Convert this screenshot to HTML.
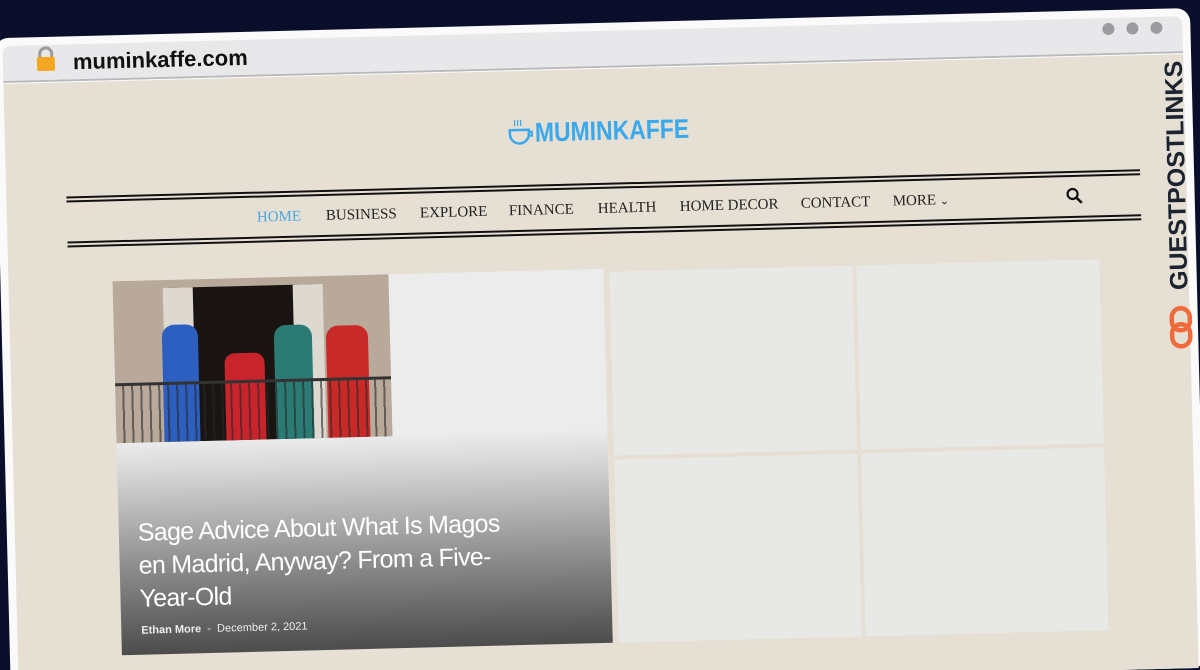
<!DOCTYPE html>
<html><head><meta charset="utf-8"><style>
*{margin:0;padding:0;box-sizing:border-box}
html,body{width:1200px;height:670px;overflow:hidden;background:#0a0e2a}
.clip{position:absolute;left:0;top:0;width:1200px;height:670px;overflow:hidden}
.stage{position:absolute;left:0;top:0;width:1200px;height:670px;transform:rotate(-1.45deg);transform-origin:600px 335px}
.frame{position:absolute;left:2px;top:23px;width:1196px;height:660px;background:#fafafa;border-radius:14px}
.bar{position:absolute;left:10px;top:31px;width:1180px;height:37px;background:#e8e8ea;border-bottom:2px solid #b9b9bb;border-radius:8px 8px 0 0}
.content{position:absolute;left:10px;top:69px;width:1180px;height:614px;background:#e6dfd4}
.url{position:absolute;left:80px;top:36px;font:600 22px "Liberation Sans",sans-serif;color:#111}
.dot{position:absolute;top:36px;width:12px;height:12px;border-radius:50%;background:#9c9c9e}
.logo{position:absolute;left:540px;top:116px;font:bold 27px "Liberation Sans",sans-serif;color:#3aa9ec;transform:scaleX(.85);transform-origin:left}
.line{position:absolute;left:70px;width:1074px;height:6px;border-top:2px solid #111;border-bottom:2px solid #111}
.nav{position:absolute;top:201px;font:15px "Liberation Serif",serif;color:#222}
.big{position:absolute;left:114px;top:269px;width:491px;height:374px;background:linear-gradient(#ececec 0,#ececec 160px,#d8d8d8 190px,#8a8a8a 290px,#4c4c4c 374px)}
.img{position:absolute;left:0;top:0;width:276px;height:162px;background:#b8a99a;overflow:hidden}
.cell{position:absolute;background:#e8e8e7}
.title{position:absolute;left:19px;top:236px;width:385px;font:25px/33px "Liberation Sans",sans-serif;letter-spacing:-0.7px;color:#fff}
.meta{position:absolute;left:20px;top:344px;font:11px "Liberation Sans",sans-serif;color:#eee}
.gpl{position:absolute;left:1181px;top:190px;transform:translate(-50%,-50%) rotate(-90deg);font:bold 25px "Liberation Sans",sans-serif;color:#1c2330;white-space:nowrap}
</style></head><body>
<div class="clip">
<div class="stage">
<div class="frame"></div>
<div class="bar"></div>
<div class="content"></div>
<svg style="position:absolute;left:42px;top:32px" width="22" height="26" viewBox="0 0 22 26"><path d="M5 12V8a6 6 0 0 1 12 0v4" fill="none" stroke="#9a9a9a" stroke-width="3"/><rect x="2" y="11" width="18" height="14" rx="2" fill="#f5a623"/></svg>
<div class="url">muminkaffe.com</div>
<div class="dot" style="left:1110px"></div><div class="dot" style="left:1134px"></div><div class="dot" style="left:1158px"></div>
<svg style="position:absolute;left:512px;top:116px" width="28" height="28" viewBox="0 0 28 28"><path d="M8 2v6M11 2v6M14 2v6" stroke="#3aa9ec" stroke-width="1.2"/><path d="M3 12h19v4a9 9 0 0 1-19 0z" fill="none" stroke="#3aa9ec" stroke-width="2.5"/><path d="M22 14h3v4h-4" fill="none" stroke="#3aa9ec" stroke-width="2"/></svg>
<div class="logo">MUMINKAFFE</div>
<div class="line" style="top:183px"></div>
<div class="line" style="top:228px"></div>
<div class="nav" style="left:260px;color:#4aa8e0">HOME</div>
<div class="nav" style="left:329px">BUSINESS</div>
<div class="nav" style="left:423px">EXPLORE</div>
<div class="nav" style="left:512px">FINANCE</div>
<div class="nav" style="left:601px">HEALTH</div>
<div class="nav" style="left:683px">HOME DECOR</div>
<div class="nav" style="left:804px">CONTACT</div>
<div class="nav" style="left:896px">MORE <span style="font-size:11px">&#8964;</span></div>
<svg style="position:absolute;left:1069px;top:199px" width="18" height="18" viewBox="0 0 18 18"><circle cx="7" cy="7" r="5" fill="none" stroke="#111" stroke-width="2.2"/><path d="M11 11l5 5" stroke="#111" stroke-width="2.6"/></svg>
<div class="big">
 <div class="img">
  <div style="position:absolute;left:55px;top:8px;width:145px;height:154px;background:#1a1512"></div>
  <div style="position:absolute;left:50px;top:8px;width:30px;height:154px;background:#ddd8d0"></div>
  <div style="position:absolute;left:180px;top:8px;width:30px;height:154px;background:#ddd8d0"></div>
  <div style="position:absolute;left:48px;top:45px;width:36px;height:117px;background:#2d5fc0;border-radius:12px 12px 0 0"></div>
  <div style="position:absolute;left:110px;top:75px;width:40px;height:87px;background:#c8242c;border-radius:10px 10px 0 0"></div>
  <div style="position:absolute;left:160px;top:48px;width:38px;height:114px;background:#2b7a74;border-radius:12px 12px 0 0"></div>
  <div style="position:absolute;left:212px;top:50px;width:42px;height:112px;background:#c82a2a;border-radius:12px 12px 0 0"></div>
  <div style="position:absolute;left:0;top:102px;width:276px;height:3px;background:#333"></div>
  <div style="position:absolute;left:0;top:105px;width:276px;height:57px;background:repeating-linear-gradient(90deg,transparent 0 7px,rgba(40,40,40,.6) 7px 9px)"></div>
 </div>
 <div class="title">Sage Advice About What Is Magos en Madrid, Anyway? From a Five-Year-Old</div>
 <div class="meta"><b>Ethan More</b> &nbsp;-&nbsp; December 2, 2021</div>
</div>
<div class="cell" style="left:611px;top:272px;width:243px;height:184px"></div>
<div class="cell" style="left:858px;top:272px;width:243px;height:184px"></div>
<div class="cell" style="left:611px;top:460px;width:243px;height:183px"></div>
<div class="cell" style="left:858px;top:460px;width:243px;height:183px"></div>
<div class="gpl">GUESTPOSTLINKS</div>
<svg style="position:absolute;left:1169px;top:320px" width="24" height="44" viewBox="0 0 24 44"><rect x="3" y="3" width="18" height="22" rx="9" fill="none" stroke="#f06a3a" stroke-width="4.5"/><rect x="3" y="19" width="18" height="22" rx="9" fill="none" stroke="#f06a3a" stroke-width="4.5"/></svg>
</div>
</div>
</body></html>
